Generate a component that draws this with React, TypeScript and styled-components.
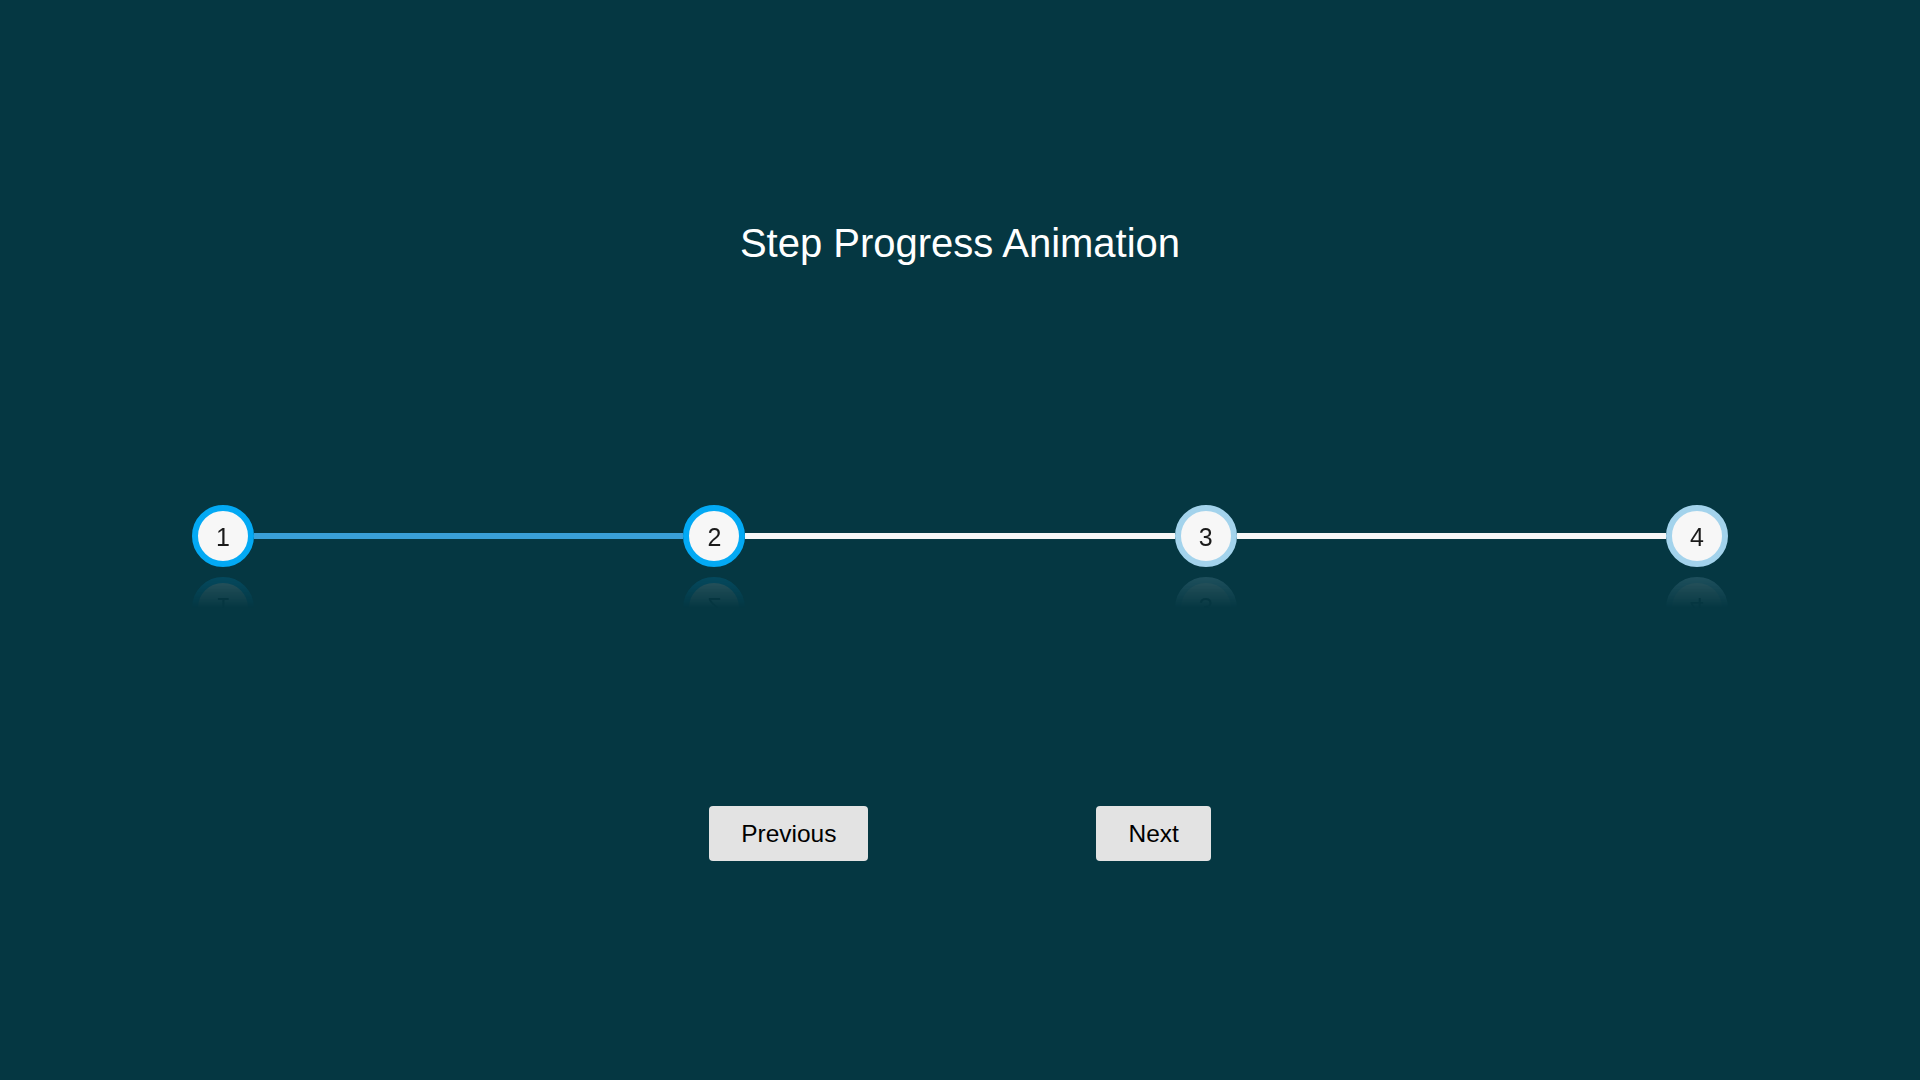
import React, { useState } from "react";
import styled, { createGlobalStyle } from "styled-components";

const Global = createGlobalStyle`
  html, body {
    margin: 0;
    padding: 0;
    background: #053742;
  }
  body {
    font-family: "Liberation Sans", Arial, sans-serif;
  }
`;

const Page = styled.main`
  min-height: 100vh;
  box-sizing: border-box;
  padding-top: 220px;
  display: flex;
  flex-direction: column;
  align-items: center;
`;

const Title = styled.h1`
  margin: 0;
  font-size: 40px;
  line-height: 46px;
  font-weight: 400;
  color: #ffffff;
`;

const Steps = styled.div`
  width: 80%;
  margin-top: 239px;
  display: flex;
  align-items: center;
`;

const Circle = styled.div<{ $active: boolean }>`
  flex: none;
  width: 50px;
  height: 48px;
  padding-top: 2px;
  border-radius: 50%;
  border: 6px solid ${(p) => (p.$active ? "#03a9f4" : "#a3d3ec")};
  background: #f7f7f7;
  color: #1a1a1a;
  font-size: 25px;
  display: flex;
  align-items: center;
  justify-content: center;
  -webkit-box-reflect: below 10px
    linear-gradient(transparent 50%, rgba(255, 255, 255, 0.16));
`;

const Connector = styled.div<{ $done: boolean }>`
  flex: 1;
  height: 6px;
  background: ${(p) => (p.$done ? "#3aa0d8" : "#f7f7f7")};
`;

const Controls = styled.div`
  margin-top: 239px;
  display: flex;
  gap: 228px;
`;

const Button = styled.button`
  font-family: "Liberation Sans", Arial, sans-serif;
  font-size: 24.5px;
  line-height: 28px;
  padding: 13.5px 32px;
  border: none;
  border-radius: 4px;
  background: #e3e3e3;
  color: #000000;
  cursor: pointer;
`;

export default function App() {
  const [current, setCurrent] = useState(2);
  const total = 4;
  const items: React.ReactNode[] = [];
  for (let i = 1; i <= total; i++) {
    items.push(
      <Circle key={`c${i}`} $active={i <= current}>
        {i}
      </Circle>
    );
    if (i < total) {
      items.push(<Connector key={`l${i}`} $done={i < current} />);
    }
  }
  return (
    <>
      <Global />
      <Page>
        <Title>Step Progress Animation</Title>
        <Steps>{items}</Steps>
        <Controls>
          <Button onClick={() => setCurrent((c) => Math.max(1, c - 1))}>
            Previous
          </Button>
          <Button onClick={() => setCurrent((c) => Math.min(total, c + 1))}>
            Next
          </Button>
        </Controls>
      </Page>
    </>
  );
}
